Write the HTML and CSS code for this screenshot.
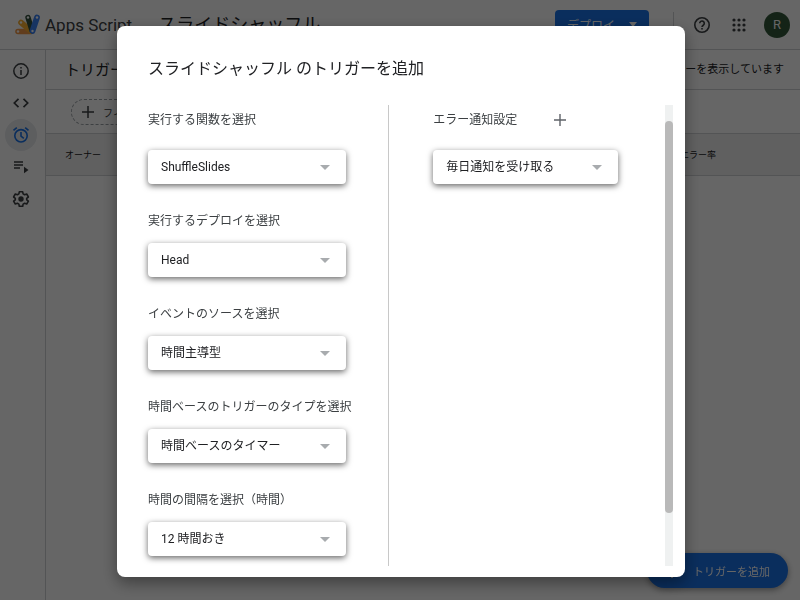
FILE: index.html
```html
<!DOCTYPE html>
<html lang="ja">
<head>
    <meta charset="UTF-8">
    <meta name="viewport" content="width=device-width, initial-scale=1.0">
    <title>スライドシャッフル - Apps Script</title>
    <link rel="stylesheet" href="styles.css">
</head>
<body>
    <div class="page">
        <header class="topbar">
            <a class="brand" href="#">
                <svg class="logo" viewBox="0 0 28 24" aria-hidden="true">
                    <path d="M4 18.500h13" stroke="#f29a4a" stroke-width="5.600" stroke-linecap="round"/>
                    <path d="M7 9.500l10 8.500" stroke="#fbb030" stroke-width="5.600" stroke-linecap="round"/>
                    <path d="M14 4.500l4 13" stroke="#34503c" stroke-width="5.400" stroke-linecap="round"/>
                    <path d="M23 4.500l-4.500 13.500" stroke="#3b82f6" stroke-width="5.800" stroke-linecap="round"/>
                    <g fill="#fff">
                        <circle cx="4" cy="18.500" r="1.200"/>
                        <circle cx="7" cy="9.500" r="1.200"/>
                        <circle cx="14" cy="4.500" r="1.200"/>
                        <circle cx="23" cy="4.500" r="1.200"/>
                        <circle cx="18.500" cy="18" r="1.200"/>
                    </g>
                </svg>
                <span>Apps Script</span>
            </a>
            <h1 class="project-name">スライドシャッフル</h1>
            <button class="deploy" type="button">デプロイ<span class="caret"></span></button>
            <div class="tools">
                <button class="icon-button" type="button" aria-label="ヘルプ">
                    <svg width="18" height="18" viewBox="0 0 18 18" fill="none" stroke="currentColor" stroke-width="1.600">
                        <circle cx="9" cy="9" r="7.200"/>
                        <path d="M6.700 7.300a2.300 2.300 0 1 1 3.700 1.800c-.9.7-1.400 1-1.400 2"/>
                        <path d="M9 12v1.600"/>
                    </svg>
                </button>
                <button class="icon-button" type="button" aria-label="アプリ">
                    <svg width="14" height="14" viewBox="0 0 14 14" fill="currentColor">
                        <circle cx="2" cy="2" r="1.600"/><circle cx="7" cy="2" r="1.600"/><circle cx="12" cy="2" r="1.600"/>
                        <circle cx="2" cy="7" r="1.600"/><circle cx="7" cy="7" r="1.600"/><circle cx="12" cy="7" r="1.600"/>
                        <circle cx="2" cy="12" r="1.600"/><circle cx="7" cy="12" r="1.600"/><circle cx="12" cy="12" r="1.600"/>
                    </svg>
                </button>
                <button class="avatar" type="button">R</button>
            </div>
        </header>

        <div class="workspace">
            <nav class="sidebar">
                <a href="#" aria-label="概要">
                    <svg width="18" height="18" viewBox="0 0 18 18" fill="none" stroke="currentColor" stroke-width="1.500">
                        <circle cx="9" cy="9" r="7.200"/>
                        <path d="M9 8v5M9 5v1.600"/>
                    </svg>
                </a>
                <a href="#" aria-label="エディタ">
                    <svg width="18" height="18" viewBox="0 0 18 18" fill="none" stroke="currentColor" stroke-width="1.700">
                        <path d="M6.500 4.800L2.300 9l4.200 4.200M11.500 4.800L15.700 9l-4.200 4.200"/>
                    </svg>
                </a>
                <a class="active" href="#" aria-label="トリガー">
                    <svg width="18" height="18" viewBox="0 0 18 18" fill="none" stroke="currentColor" stroke-width="1.600">
                        <circle cx="9" cy="9.800" r="6.200"/>
                        <path d="M9 6v4.200l2.800 2.200M1.500 4.400l3.300-2.700M16.500 4.400l-3.300-2.700"/>
                    </svg>
                </a>
                <a href="#" aria-label="実行数">
                    <svg width="18" height="18" viewBox="0 0 18 18" fill="none" stroke="currentColor" stroke-width="1.500">
                        <path d="M2 4h9M2 7h9M2 10h6"/>
                        <path d="M12 8.700l4.500 3.300-4.500 3.300z" fill="currentColor" stroke="none"/>
                    </svg>
                </a>
                <a href="#" aria-label="プロジェクトの設定">
                    <svg width="18" height="18" viewBox="0 0 18 18" fill="none" stroke="currentColor" stroke-width="1.600" stroke-linejoin="round">
                        <path d="M7.300 1.800h3.400l.4 2.100 1.500.9 2.100-.8 1.700 3-1.700 1.300v1.500l1.700 1.300-1.700 2.900-2.100-.7-1.500.8-.4 2.200H7.300l-.4-2.200-1.500-.8-2.100.7-1.700-2.900 1.700-1.300V8.300L1.600 7l1.700-3 2.100.8 1.500-.9z"/>
                        <circle cx="9" cy="9" r="1.900" fill="currentColor"/>
                    </svg>
                </a>
            </nav>
            <main class="content">
                <div class="title-row">
                    <h2>トリガー</h2>
                    <span>トリガーを表示しています</span>
                </div>
                <div class="filter-row">
                    <button class="filter" type="button">
                        <svg width="12" height="12" viewBox="0 0 12 12" stroke="currentColor" stroke-width="1.500"><path d="M6 0v12M0 6h12"/></svg>
                        フィルタ
                    </button>
                </div>
                <table class="triggers">
                    <thead>
                        <tr>
                            <th>オーナー</th>
                            <th class="error-rate">エラー率</th>
                        </tr>
                    </thead>
                </table>
            </main>
        </div>

        <button class="add-trigger" type="button">
            <svg width="14" height="14" viewBox="0 0 14 14" stroke="currentColor" stroke-width="2"><path d="M7 0v14M0 7h14"/></svg>
            トリガーを追加
        </button>
    </div>

    <div class="overlay">
        <form class="dialog" role="dialog" aria-labelledby="dialogTitle">
            <h2 id="dialogTitle" class="dialog-title">スライドシャッフル のトリガーを追加</h2>
            <div class="dialog-body">
                <div class="settings">
                    <div class="field">
                        <div class="field-head"><label for="func">実行する関数を選択</label></div>
                        <div class="select-box">
                            <select id="func"><option>ShuffleSlides</option></select>
                        </div>
                    </div>
                    <div class="field">
                        <label for="deployment">実行するデプロイを選択</label>
                        <div class="select-box">
                            <select id="deployment"><option>Head</option></select>
                        </div>
                    </div>
                    <div class="field">
                        <label for="source">イベントのソースを選択</label>
                        <div class="select-box">
                            <select id="source"><option>時間主導型</option></select>
                        </div>
                    </div>
                    <div class="field">
                        <label for="triggerType">時間ベースのトリガーのタイプを選択</label>
                        <div class="select-box">
                            <select id="triggerType"><option>時間ベースのタイマー</option></select>
                        </div>
                    </div>
                    <div class="field">
                        <label for="interval">時間の間隔を選択（時間）</label>
                        <div class="select-box">
                            <select id="interval"><option>12 時間おき</option></select>
                        </div>
                    </div>
                </div>
                <div class="notifications">
                    <div class="field">
                        <div class="field-head">
                            <label for="notify">エラー通知設定</label>
                            <button class="icon-button" type="button" aria-label="通知を追加">
                                <svg width="12" height="12" viewBox="0 0 12 12" stroke="currentColor" stroke-width="1.400"><path d="M6 0v12M0 6h12"/></svg>
                            </button>
                        </div>
                        <div class="select-box">
                            <select id="notify"><option>毎日通知を受け取る</option></select>
                        </div>
                    </div>
                </div>
                <div class="scroll-track"><div class="scroll-thumb"></div></div>
            </div>
        </form>
    </div>
</body>
</html>
```

FILE: styles.css
```css
* {
    box-sizing: border-box;
    margin: 0;
    padding: 0;
}

body,
button,
select {
    font-family: Roboto, "Noto Sans CJK JP", sans-serif;
}

body {
    background: #ffffff;
    color: #202124;
    font-size: 12px;
}

button {
    border: none;
    background: none;
    cursor: pointer;
}

svg {
    display: block;
    flex: none;
}

.page {
    display: flex;
    flex-direction: column;
    height: 100vh;
    overflow: hidden;
}

/* Top bar */
.topbar {
    display: flex;
    align-items: center;
    height: 50px;
    padding: 0 10px 0 14px;
    border-bottom: 1px solid #d0d2d5;
}

.brand {
    display: flex;
    align-items: center;
    gap: 3px;
    color: #3c4043;
    font-size: 17px;
    text-decoration: none;
    white-space: nowrap;
}

.logo {
    width: 28px;
    height: 24px;
}

.project-name {
    margin-left: 26px;
    font-size: 18px;
    font-weight: 400;
    line-height: 24px;
    white-space: nowrap;
}

.deploy {
    display: flex;
    align-items: center;
    gap: 14px;
    height: 30px;
    margin-left: auto;
    padding: 0 12px;
    border-radius: 4px;
    background: #1a73e8;
    color: #ffffff;
    font-size: 12px;
}

.caret,
.select-box::after {
    border: 4px solid transparent;
    border-top: 5px solid #ffffff;
    border-bottom: 0;
}

.tools {
    display: flex;
    align-items: center;
    gap: 13px;
    margin-left: 24px;
    padding-left: 16px;
    border-left: 1px solid #d0d2d5;
}

.icon-button {
    display: grid;
    place-items: center;
    width: 24px;
    height: 24px;
    color: #5f6368;
}

.topbar .icon-button {
    color: #3c4043;
}

.avatar {
    width: 26px;
    height: 26px;
    border-radius: 50%;
    background: #33593a;
    color: #ffffff;
    font-size: 13px;
}

/* Side navigation */
.workspace {
    display: flex;
    flex: 1;
}

.sidebar {
    display: flex;
    flex-direction: column;
    width: 46px;
    padding: 5px 0 0 5px;
    border-right: 1px solid #d0d2d5;
}

.sidebar a {
    display: grid;
    place-items: center;
    width: 32px;
    height: 32px;
    border-radius: 50%;
    color: #3c4043;
}

.sidebar .active {
    background: #e8eaed;
    color: #1a73e8;
}

/* Trigger list */
.content {
    flex: 1;
}

.title-row {
    display: flex;
    align-items: center;
    justify-content: space-between;
    height: 40px;
    padding: 0 16px 3px 19px;
    border-bottom: 1px solid #d0d2d5;
    font-size: 11px;
}

.title-row h2 {
    font-size: 15px;
    font-weight: 400;
}

.filter-row {
    height: 43px;
    padding: 9px 25px;
}

.filter {
    display: flex;
    align-items: center;
    gap: 9px;
    height: 26px;
    padding: 0 10px;
    border: 1px dashed #9aa0a6;
    border-radius: 13px;
    color: #3c4043;
    font-size: 10px;
}

.triggers {
    width: 100%;
    border-collapse: collapse;
    background: #f1f1f1;
}

.triggers th {
    height: 42px;
    padding: 0 19px;
    border-top: 1px solid #d0d2d5;
    border-bottom: 1px solid #d0d2d5;
    font-size: 9px;
    font-weight: 400;
    text-align: left;
}

.triggers .error-rate {
    padding-right: 84px;
    text-align: right;
}

.add-trigger {
    position: fixed;
    right: 12px;
    bottom: 12px;
    display: flex;
    align-items: center;
    gap: 14px;
    height: 35px;
    padding: 0 18px;
    border-radius: 18px;
    background: #1a73e8;
    color: #ffffff;
    font-size: 11px;
    box-shadow: 0 2px 6px rgba(0,0,0,0.4);
}

/* Add trigger dialog */
.overlay {
    position: fixed;
    inset: 0;
    display: grid;
    padding: 26px 115px 23px 117px;
    background: rgba(0,0,0,0.6);
}

.dialog {
    display: flex;
    flex-direction: column;
    min-height: 0;
    padding: 33px 12px 11px 31px;
    border-radius: 8px;
    background: #ffffff;
    box-shadow: 0 6px 16px rgba(0,0,0,0.4);
}

.dialog-title {
    margin-bottom: 26px;
    font-size: 16px;
    font-weight: 400;
    line-height: 20px;
}

.dialog-body {
    display: grid;
    grid-template-columns: minmax(0, 7fr) minmax(0, 8fr) 8px;
    flex: 1;
    min-height: 0;
    overflow: hidden;
    margin-left: -10px;
    padding-left: 10px;
}

.settings,
.notifications {
    display: flex;
    flex-direction: column;
    gap: 26px;
}

.settings {
    padding-right: 42px;
    border-right: 1px solid #c8c8c8;
}

.notifications {
    padding: 0 47px 0 44px;
}

.field {
    display: flex;
    flex-direction: column;
    gap: 11px;
    color: #3c4043;
    line-height: 22px;
    white-space: nowrap;
}

.field-head {
    display: flex;
    align-items: center;
    gap: 31px;
    height: 30px;
    margin-bottom: 4px;
}

.select-box {
    display: grid;
    align-items: center;
    border-radius: 4px;
    background: #ffffff;
    box-shadow: 0 2px 6px rgba(0,0,0,0.6);
}

.select-box select,
.select-box::after {
    grid-area: 1 / 1;
}

.select-box select {
    width: 100%;
    height: 34px;
    padding: 0 32px 0 13px;
    border: none;
    border-radius: 4px;
    background: transparent;
    appearance: none;
    color: #202124;
    font-size: 12px;
}

.select-box::after {
    content: "";
    justify-self: end;
    margin-right: 16px;
    border-width: 5px 5px 0;
    border-top-color: #a8abae;
    pointer-events: none;
}

.scroll-track {
    padding-top: 16px;
    background: #eff1f1;
}

.scroll-thumb {
    height: 88%;
    border-radius: 4px;
    background: #b9b9b9;
}
```
